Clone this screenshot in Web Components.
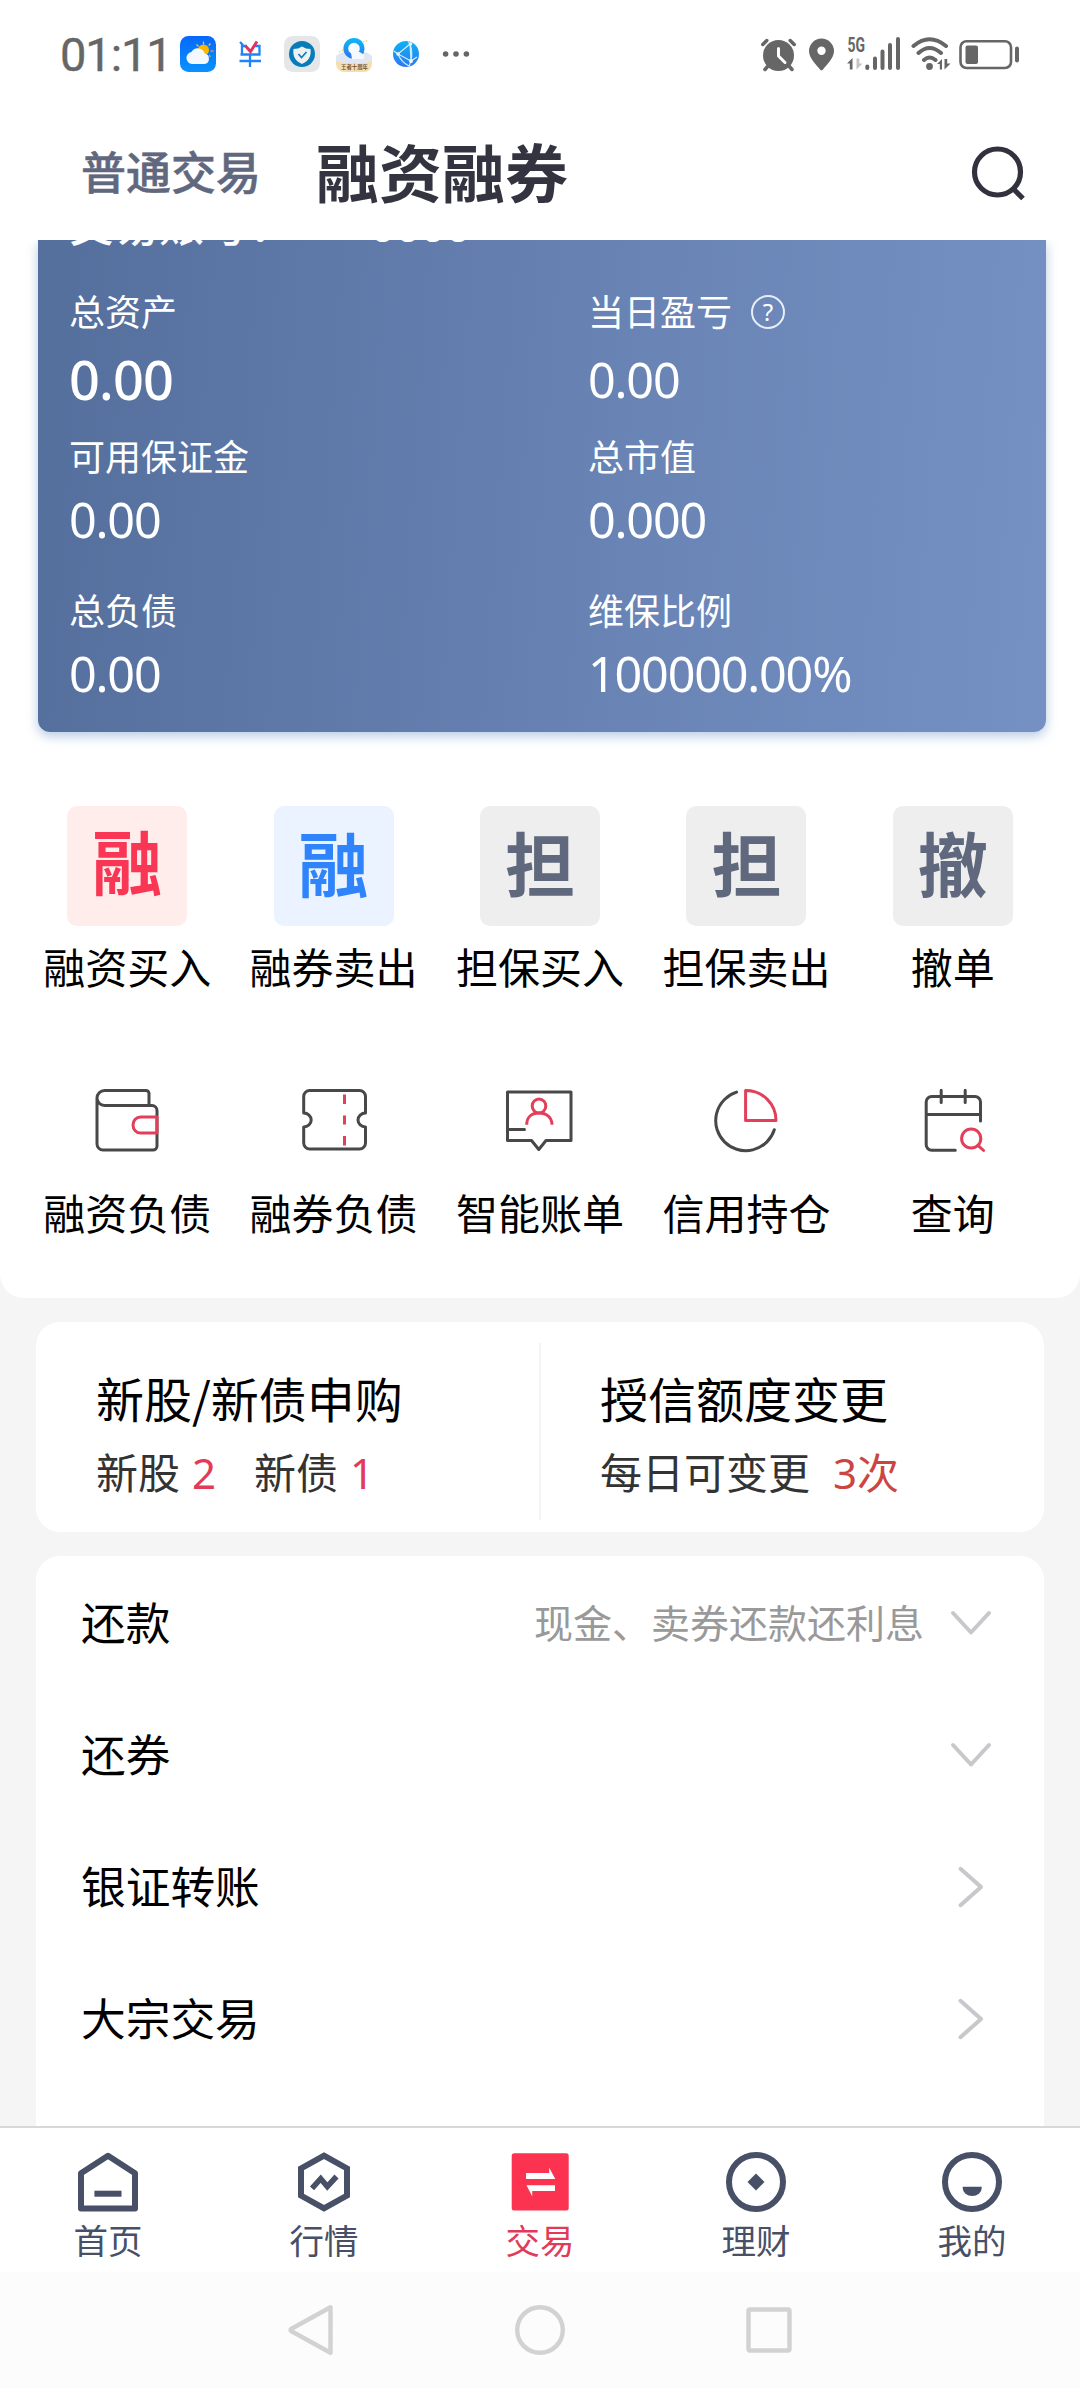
<!DOCTYPE html>
<html lang="zh-CN">
<head>
<meta charset="utf-8">
<title>融资融券</title>
<style>
html,body{margin:0;padding:0}
body{width:1080px;height:2388px;overflow:hidden;background:#f5f5f5;font-family:"Noto Sans CJK SC",sans-serif;color:#000}
</style>
</head>
<body>
<trade-app></trade-app>
<script>
const define = (name, html) => customElements.define(name, class extends HTMLElement {
  constructor() {
    super();
    this.attachShadow({ mode: 'open' }).innerHTML = typeof html === 'function' ? '' : html;
  }
  connectedCallback() {
    if (typeof html === 'function') this.shadowRoot.innerHTML = html(this);
  }
});

const D = 'fill="none" stroke="#484848" stroke-width="3" stroke-linecap="round" stroke-linejoin="round"';
const R = 'fill="none" stroke="#e23f5b" stroke-width="3" stroke-linejoin="round"';
const N = 'fill="none" stroke="#475066" stroke-width="6"';
const C = 'fill="none" stroke="#c8c8cc" stroke-width="4" stroke-linecap="round" stroke-linejoin="round"';
const S = 'fill="none" stroke="#d2d2d2" stroke-width="4.4" stroke-linejoin="round"';
const ICONS = {
  wallet: `<path ${D} d="M-30-22V24a6 6 0 0 0 6 6H26a4 4 0 0 0 4-4V-9.500a5 5 0 0 0-5-5H-22.500a7.500 7.500 0 0 1 0-15H19a3 3 0 0 1 3 3V-14.500"/><path ${R} d="M30-3H13.500a7.500 8 0 0 0 0 16H30Z"/>`,
  ticket: `<path ${D} d="M-24-29.500H25.500a6 6 0 0 1 6 6V-7a7.500 7 0 0 0 0 14V23a6 6 0 0 1-6 6H-24.300a6 6 0 0 1-6-6V7a7.500 7 0 0 0 0-14V-23.500a6 6 0 0 1 6-6"/><path ${R} d="M10.500-25.500v9.500M10.500-4.500v9M10.500 16v9.500"/>`,
  bill: `<path ${D} d="M-32.500-28H31V20.500H6L-1.200 29.500L-8.500 20.500H-32.500ZM-32 9.500H-15.500"/><ellipse ${R} cx="-1" cy="-14" rx="6.800" ry="7"/><path ${R} d="M-13.300 4.800C-13.300-2.800-8.500-7-1-7S12 -2.800 12 4.800"/>`,
  pie: `<path ${D} d="M-9.400-27.900A30 30 0 1 0 28.300 9.800"/><path ${R} d="M-.400-29.500A30 30 0 0 1 30 .500H-.400Z"/>`,
  calendar: `<path ${D} d="M27.500 1V-18a5.500 5.500 0 0 0-5.500-5.500H-21.300a5.500 5.500 0 0 0-5.500 5.500V24.700a5.500 5.500 0 0 0 5.500 5.500H2.300M-26.800-5.500H27.500M-11.800-29.700V-17.500M12.200-29.700V-17.500"/><circle ${R} cx="18.200" cy="18.500" r="9.600"/><path ${R} stroke-linecap="round" d="M25 25.300L30.600 30.500"/>`,
  home: `<path ${N} stroke-linejoin="round" d="M-27-8.800L0-26.300L27-8.800V26.500H-27Z"/><path ${N} d="M-13.600 11.700H13.500"/>`,
  market: `<path ${N} d="M0-26.400L23-13.500V13.500L0 26.400L-23 13.500V-13.500Z"/><path fill="none" stroke="#475066" stroke-width="5.600" d="M-12 6.300L-3.300-3.300L3.300 4.600L12.500-5.500"/>`,
  trade: `<rect x="-28.300" y="-28.700" width="57" height="57.200" rx="2.500" fill="#fb3350"/><path fill="#fff" d="M-14-9H9.200V-14.300L15.300-3H-14ZM15 3.300H-13.500L-7.800 14.300V9H15Z"/>`,
  wealth: `<circle ${N} r="27"/><path fill="#475066" d="M0-8.500L8.500 0L0 8.500L-8.500 0Z"/>`,
  me: `<circle ${N} r="27"/><path fill="#475066" d="M-9.300 4.800H9.700V6A9.500 8 0 0 1-9.300 6Z"/>`,
  down: `<path ${C} d="M-18-10L0 9.500L18-10"/>`,
  right: `<path ${C} d="M-10.500-18.200L10 0L-10.500 18.200"/>`,
  search: `<circle cx="-1.500" cy="-1" r="23" fill="none" stroke="#32323e" stroke-width="5.200"/><path d="M15.500 17L24 25.500" stroke="#32323e" stroke-width="5.200"/>`,
  back: `<path ${S} d="M19.500-22.800V22.800L-19.500 1.300Q-21.500 0-19.500-1.300Z"/>`,
  circle: `<circle ${S} r="22.800"/>`,
  square: `<rect ${S} x="-20.500" y="-20.500" width="41" height="41" rx="1.500"/>`
};
define('ui-icon', el => {
  const s = +el.getAttribute('size');
  return `<style>:host{display:block;flex:none;width:${s}px;height:${s}px}svg{display:block;overflow:visible}</style>
  <svg width="${s}" height="${s}" viewBox="${-s/2} ${-s/2} ${s} ${s}">${ICONS[el.getAttribute('name')]}</svg>`;
});

define('status-bar', `<style>
:host{display:flex;align-items:center;height:108px;padding:0 60px 0 60px;box-sizing:border-box;background:#fff}
time{font:400 47px/56px Roboto,sans-serif;color:#666;width:118px;white-space:nowrap;letter-spacing:-1.1px;-webkit-text-stroke:.4px #666;margin-top:2px}
svg{display:block;flex:none}.grow{flex:1}
</style>
<time>01:11</time>
<svg width="300" height="40" viewBox="178 34 300 40">
  <defs><linearGradient id="w" x2="0" y2="1"><stop stop-color="#0668fa"/><stop offset="1" stop-color="#0a92ff"/></linearGradient>
  <linearGradient id="g" x2="0" y2="1"><stop stop-color="#0db2f7"/><stop offset="1" stop-color="#2e79ee"/></linearGradient></defs>
  <rect x="180" y="36" width="36" height="36" rx="8.500" fill="url(#w)"/>
  <path d="M203.500 41.500v3M196.500 44.500l2 2M193.500 51h2M210.500 43.500l-1.800 2M213.500 51h-3M210.500 56.500l-1.500-1" stroke="#f5c04b" stroke-width="1.200"/>
  <circle cx="203.500" cy="50" r="5.500" fill="#ffb500"/>
  <path d="M192 64a6 6 0 0 1-.600-11.900a7.300 7.300 0 0 1 13.400 1.500a5.300 5.300 0 0 1-.300 10.400Z" fill="#f4f9ff"/>
  <path d="M240 42l3 3M242 55V46h5M255 46h4.500v9M240.500 54.500h20M239.500 61h21.500M250 55v12" fill="none" stroke="#1c86f8" stroke-width="2.300"/>
  <path d="M245.500 46l5 5.500l6.500-10" fill="none" stroke="#e33161" stroke-width="3"/>
  <rect x="284" y="36" width="36" height="36" rx="8.500" fill="#e5e6e8"/><circle cx="302" cy="54" r="13" fill="#087cb8"/>
  <path d="M302 46.500Q305.500 49 310.500 49C311.500 56.500 308.500 61 302 64C295.500 61 292.500 56.500 293.500 49Q298.500 49 302 46.500" fill="#edf1f4"/>
  <path d="M298.500 54l3 3.500l5-5.500" fill="none" stroke="#087cb8" stroke-width="1.600"/>
  <path d="M336 56Q345 48 354 54Q365 49 372 56V65H336Z" fill="#e1e6f5"/>
  <circle cx="354" cy="48.500" r="8.200" fill="#f7fbff" stroke="url(#g)" stroke-width="4.800"/>
  <path d="M351 53Q356 48 364 55V59H352Z" fill="#f4f8ff"/><path d="M363 42l6-2M339 52l4-2" stroke="#efcf75" stroke-width="1.200" stroke-dasharray="1.500 1.500"/>
  <path d="M336 61Q354 66 372 61V64a8 8 0 0 1-8 8H344a8 8 0 0 1-8-8Z" fill="#f4dfb0"/>
  <text x="341" y="69" font-family="Noto Sans CJK SC" font-weight="700" font-size="5.400" fill="#755236">王者十周年</text>
  <circle cx="406" cy="54" r="13" fill="url(#g)"/>
  <path d="M410 44L398 54L411 61ZM398 54L394 51M410 44L408 41.500M411 61L409 66.500M411 61L417 57M410 44Q413 52 411 61M398 54Q401 62 409 66" fill="none" stroke="#d5efff" stroke-width="1.100"/>
  <g fill="#f2fbff"><circle cx="398" cy="54" r="1.700"/><circle cx="410.500" cy="44" r="1.700"/><circle cx="411" cy="61" r="2"/></g>
  <g fill="#666"><circle cx="445.600" cy="54" r="2.800"/><circle cx="456" cy="54" r="2.800"/><circle cx="466.400" cy="54" r="2.800"/></g>
</svg>
<span class="grow"></span>
<svg width="260" height="40" viewBox="760 34 260 40" fill="#666" stroke-linecap="round" stroke-linejoin="round">
  <circle cx="778.500" cy="55.500" r="15.500"/><path d="M778.500 48.500V56l6.500 6.500" fill="none" stroke="#fff" stroke-width="3"/>
  <path d="M762.800 44.500l4-4M794.200 44.500l-4-4M768 66l-3 3.500M789 66l3 3.500" fill="none" stroke="#666" stroke-width="3.500"/>
  <path fill-rule="evenodd" d="M821.500 38.500a12.500 12.500 0 0 1 12.500 12.500c0 7.500-8 14.500-11 18.500q-1.500 1.700-3 0c-3-4-11-11-11-18.500a12.500 12.500 0 0 1 12.500-12.500Zm0 8a4.200 4.200 0 1 0 0 8.400a4.200 4.200 0 0 0 0-8.400Z"/>
  <text x="847.500" y="51.500" font-family="Roboto" font-weight="700" font-size="20" textLength="17.500" lengthAdjust="spacingAndGlyphs">5G</text>
  <path d="M847 63.500l5.500-5.500V69.500h-2.700v-6Z"/><path fill="#c4c4c4" d="M856.500 58.500V69.500l6-6h-3.200v-5Z"/>
  <g fill="none" stroke="#666" stroke-width="4"><path d="M867.300 66.500v1.500M875 58.500v9.500M882.500 51.500v16.500M890 45v23M898 39v29"/>
  <path d="M913.500 46Q929.500 32.500 946 46M918.500 53Q929.500 43 941 53M924 60Q929.500 55 935.500 60"/></g>
  <circle cx="929.500" cy="66.500" r="3.400"/><path d="M937 64l5-5V69.500h-2.200V64ZM944.500 59V69.500l6-6h-3.300V59Z"/>
  <rect x="960.500" y="41.200" width="50.500" height="26.800" rx="6" fill="none" stroke="#666" stroke-width="2.600"/><rect x="965.500" y="45.500" width="12.500" height="18.500" rx="2"/>
  <path d="M1017 48.500v12" stroke="#666" stroke-width="4"/>
</svg>`);

define('page-header', `<style>
:host{display:flex;align-items:center;height:132px;padding:0 54px 0 81px;background:#fff;box-sizing:border-box}
span{font-size:45px;font-weight:500;color:#5f687e;line-height:66px;margin-top:-6px;-webkit-text-stroke:.5px #5f687e}
h1{margin:-8px 0 0 55px;font-size:63px;line-height:90px;font-weight:700;color:#343440;flex:1}
ui-icon{margin-top:-2px}
</style><span>普通交易</span><h1>融资融券</h1><ui-icon name="search" size="54"></ui-icon>`);

define('stat-item', el => `<style>
:host{display:flex;flex-direction:column;color:#fff}
.l{display:flex;align-items:center;gap:19px;font-size:36px;line-height:50px}
.v{font-family:"Noto Sans",sans-serif;font-size:48.500px;letter-spacing:-1.200px;line-height:60px;margin-top:var(--gap,9px)}
:host([strong]) .v{font-size:54px;font-weight:500;letter-spacing:-.8px}
.q{box-sizing:border-box;width:34px;height:34px;border:2px solid #e8eef8;border-radius:50%;font-family:"Noto Sans",sans-serif;font-size:24px;line-height:30px;text-align:center;margin-top:4px}
</style><div class="l">${el.getAttribute('label')}${el.hasAttribute('help') ? '<span class="q">?</span>' : ''}</div><div class="v"><slot></slot></div>`);

define('account-card', `<style>
:host{display:block;height:492px;margin:0 34px 0 38px;box-sizing:border-box;padding-left:31px;border-radius:0 0 12px 12px;background:linear-gradient(94deg,#546f9c 0%,#6580b0 47%,#7591c4 100%);box-shadow:0 4px 12px rgba(72,122,184,.4)}
.wrap{display:flow-root}
.acct{display:flex;align-items:baseline;height:65px;margin-top:-50px;line-height:65px;font-size:45px;font-weight:500;color:#fff}
.acct b{font-family:"Noto Sans",sans-serif;font-weight:500;font-size:44px;margin-left:76px}
.grid{display:grid;grid-template-columns:519px 1fr;grid-template-rows:145px 154px 120px;padding-top:30px}
.first{--gap:14px}
</style><div class="wrap"><div class="acct"><span>交易账号：</span><b>0000</b></div>
<div class="grid">
<stat-item class="first" strong label="总资产">0.00</stat-item><stat-item class="first" help label="当日盈亏">0.00</stat-item>
<stat-item label="可用保证金">0.00</stat-item><stat-item label="总市值">0.000</stat-item>
<stat-item label="总负债">0.00</stat-item><stat-item label="维保比例">100000.00%</stat-item>
</div></div>`);

define('quick-action', el => `<style>
:host{display:flex;flex-direction:column;align-items:center;font-size:42px;line-height:50px;white-space:nowrap}
.tile{width:120px;height:120px;border-radius:10px;background:#eee;color:#5f687c;font-size:70px;line-height:112px;font-weight:700;text-align:center;margin-bottom:15px}
.red{background:#ffedec;color:#fa3655;line-height:108px}.blue{background:#eaf3ff;color:#2f84fb}
</style><div class="tile ${el.getAttribute('tone') || ''}">${el.getAttribute('mark')}</div><slot></slot>`);

define('icon-action', el => `<style>
:host{display:flex;flex-direction:column;align-items:center;font-size:42px;line-height:50px;white-space:nowrap}
ui-icon{margin-bottom:31px}
</style><ui-icon name="${el.getAttribute('icon')}" size="72"></ui-icon><slot></slot>`);

define('overview-panel', `<style>
:host{display:block;height:1058px;background:#fff;border-radius:0 0 24px 24px}
.g{display:grid;grid-template-columns:repeat(5,1fr);padding:74px 24px 0;row-gap:93px}
</style><account-card></account-card><div class="g">
<quick-action mark="融" tone="red">融资买入</quick-action><quick-action mark="融" tone="blue">融券卖出</quick-action><quick-action mark="担">担保买入</quick-action><quick-action mark="担">担保卖出</quick-action><quick-action mark="撤">撤单</quick-action>
<icon-action icon="wallet">融资负债</icon-action><icon-action icon="ticket">融券负债</icon-action><icon-action icon="bill">智能账单</icon-action><icon-action icon="pie">信用持仓</icon-action><icon-action icon="calendar">查询</icon-action>
</div>`);

define('promo-card', `<style>
:host{display:flex;height:210px;margin:24px 36px 0;background:#fff;border-radius:24px}
section{flex:1;padding:43px 0 0 60px}
i{width:2px;margin:21px -1px 12px;background:#f4f4f4}
h2{margin:0;font-size:48px;line-height:64px;font-weight:400}
p{margin:12px 0 0;font-size:42px;line-height:60px;color:#333;display:flex;align-items:baseline}
b{font-family:"Noto Sans","Noto Sans CJK SC",sans-serif;font-weight:400;color:#e23b58;margin:0 38px 0 12px}
.t b{margin-left:23px;color:#cb4643}
</style><section><h2>新股/新债申购</h2><p>新股<b>2</b>新债<b>1</b></p></section><i></i>
<section class="t"><h2>授信额度变更</h2><p>每日可变更<b>3次</b></p></section>`);

define('list-row', el => `<style>
:host{display:flex;align-items:center;height:132px;font-size:44.700px;line-height:60px}
.t{flex:1;margin-top:-5px}.n{font-size:39px;color:#999;margin-top:-5px}
ui-icon{margin-left:18px;margin-right:44px}
</style><span class="t"><slot></slot></span><span class="n">${el.getAttribute('note') || ''}</span><ui-icon name="${el.getAttribute('arrow')}" size="58"></ui-icon>`);

define('menu-list', `<style>:host{display:block;margin:24px 36px 0;padding:1px 0 0 45px;background:#fff;border-radius:24px 24px 0 0;height:600px}</style>
<list-row arrow="down" note="现金、卖券还款还利息">还款</list-row><list-row arrow="down">还券</list-row><list-row arrow="right">银证转账</list-row><list-row arrow="right">大宗交易</list-row>`);

define('tab-item', el => `<style>
:host{flex:1;display:flex;flex-direction:column;align-items:center;padding-top:22px;font-size:34.500px;line-height:48px;color:#475066}
:host([active]){color:#e23b58}ui-icon{margin-bottom:1px}
</style><ui-icon name="${el.getAttribute('icon')}" size="64"></ui-icon><slot></slot>`);

define('tab-bar', `<style>:host{display:flex;height:146px;box-sizing:border-box;border-top:2px solid #d8d8d8;background:#fff}</style>
<tab-item icon="home">首页</tab-item><tab-item icon="market">行情</tab-item><tab-item icon="trade" active>交易</tab-item><tab-item icon="wealth">理财</tab-item><tab-item icon="me">我的</tab-item>`);

define('system-nav', `<style>:host{display:flex;justify-content:center;align-items:center;gap:179px;height:116px;background:#fcfcfc}</style>
<ui-icon name="back" size="50"></ui-icon><ui-icon name="circle" size="50"></ui-icon><ui-icon name="square" size="50"></ui-icon>`);

define('trade-app', `<style>:host{display:flex;flex-direction:column;height:2388px}main{flex:1;min-height:0;overflow:hidden}</style>
<status-bar></status-bar><page-header></page-header>
<main><overview-panel></overview-panel><promo-card></promo-card><menu-list></menu-list></main>
<tab-bar></tab-bar><system-nav></system-nav>`);
</script>
</body>
</html>
